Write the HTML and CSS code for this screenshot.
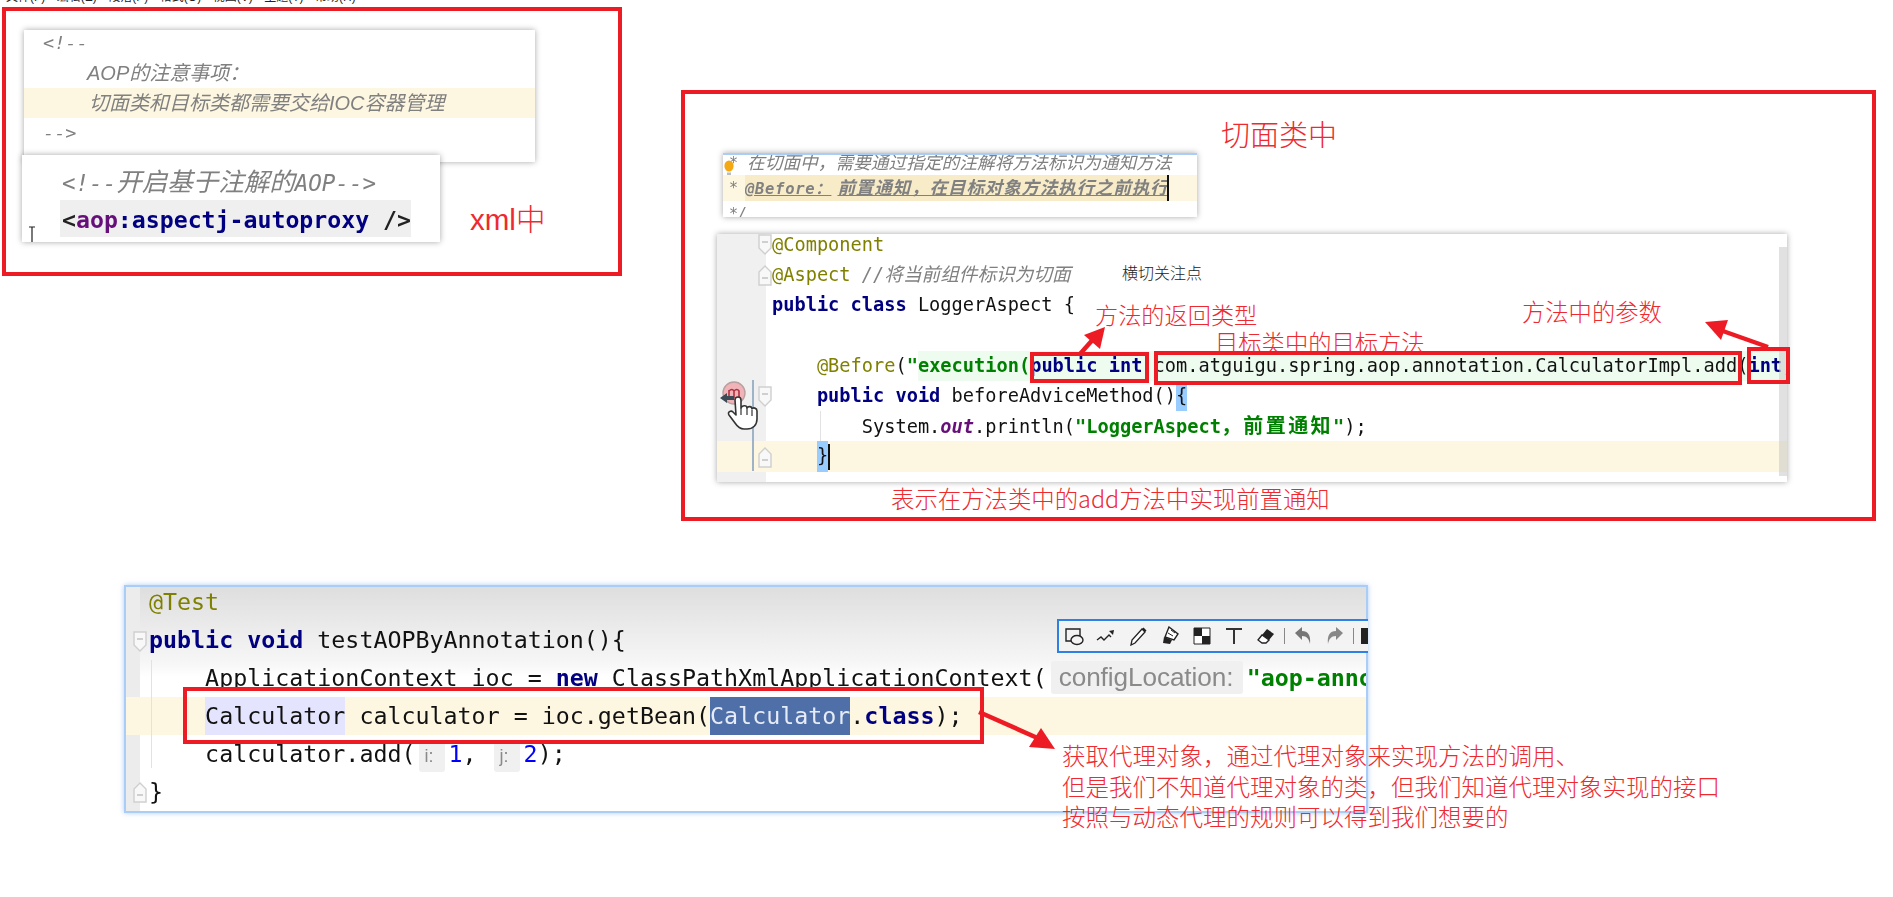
FILE: index.html
```html
<!DOCTYPE html>
<html lang="zh">
<head>
<meta charset="utf-8">
<title>AOP 笔记</title>
<link rel="stylesheet" href="styles.css">
</head>
<body>
<svg class="defs" width="0" height="0" aria-hidden="true">
  <symbol id="fold-open" viewBox="0 0 14 22"><path d="M1 1h12v13l-6 6-6-6z" fill="#f8f8f8" stroke="#cfcfcf" stroke-width="1.4"/><path d="M4 8h6" stroke="#bdbdbd" stroke-width="1.4"/></symbol>
  <symbol id="fold-close" viewBox="0 0 14 22"><path d="M1 21h12V8L7 2 1 8z" fill="#f8f8f8" stroke="#cfcfcf" stroke-width="1.4"/><path d="M4 14h6" stroke="#bdbdbd" stroke-width="1.4"/></symbol>
</svg>
<main class="canvas">
  <nav class="menu"><span>文件(F)</span><span>编辑(E)</span><span>段落(P)</span><span>格式(O)</span><span>视图(V)</span><span>主题(T)</span><span>帮助(H)</span></nav>

  <section class="frame frame-xml"></section>
  <section class="frame frame-aspect"></section>

  <div class="shot shot-note">
    <div class="note-line note-first">&lt;!--</div>
    <div class="note-line note-in1">AOP的注意事项&#65306;</div>
    <div class="note-line note-in2 note-hl">切面类和目标类都需要交给IOC容器管理</div>
    <div class="note-line note-first">--&gt;</div>
  </div>

  <div class="shot shot-xml">
    <div class="xml-comment">&lt;!--<span class="xml-cjk">开启基于注解的</span>AOP--&gt;</div>
    <div class="xml-tag">&lt;<span class="ns">aop</span><span class="tagname">:aspectj-autoproxy</span> /&gt;</div>
    <svg class="ibeam" viewBox="0 0 8 16" width="8" height="16"><path d="M1 1h6M4 1v15" stroke="#222" stroke-width="1.2" fill="none"/></svg>
  </div>
  <div class="label label-xml">xml中</div>

  <div class="label label-title">切面类中</div>

  <div class="shot shot-doc">
    <div class="doc-row doc-top"><span class="doc-star">*</span><span>在切面中&#65292;需要通过指定的注解将方法标识为通知方法</span></div>
    <div class="doc-row doc-hl"><span class="doc-star">*</span><span class="doc-mark"><span class="doc-tag">@Before&#65306;</span>前置通知&#65292;在目标对象方法执行之前执行</span></div>
    <div class="doc-row doc-end"><span class="doc-star">*/</span></div>
    <svg class="bulb" viewBox="0 0 10 16" width="10" height="16"><ellipse cx="5" cy="6" rx="4.6" ry="5.6" fill="#f3a814"/><path d="M3 12.5h4v2.5H3z" fill="#bbb"/></svg>
  </div>

  <div class="shot shot-aspect">
    <div class="code code-a">
      <div class="ln"><span class="ann">@Component</span></div>
      <div class="ln"><span class="ann">@Aspect</span> <span class="cmt">//将当前组件标识为切面</span></div>
      <div class="ln"><span class="kw">public class</span> LoggerAspect {</div>
      <div class="ln"></div>
      <div class="ln">    <span class="ann">@Before</span>(<span class="str">"</span><span class="inj"><span class="str">execution(</span><span class="kw">public int</span> com.atguigu.spring.aop.annotation.CalculatorImpl.add(<span class="kw">int</span>,<span class="kw">int</span>))</span></div>
      <div class="ln">    <span class="kw">public void</span> beforeAdviceMethod()<span class="brace">{</span></div>
      <div class="ln">        System.<span class="static">out</span>.println(<span class="str">"LoggerAspect<span class="wide">&#65292;前置通知</span>"</span>);</div>
      <div class="ln ln-hl">    <span class="brace">}</span><span class="caret"></span></div>
    </div>
    <svg class="fold f1" width="14" height="22"><use href="#fold-open"/></svg>
    <svg class="fold f2" width="14" height="22"><use href="#fold-close"/></svg>
    <svg class="fold f3" width="14" height="22"><use href="#fold-open"/></svg>
    <svg class="fold f4" width="14" height="22"><use href="#fold-close"/></svg>
    <div class="gutter-line"></div>
    <div class="guide"></div>
    <div class="scrollbar"></div>
    <svg class="hand" viewBox="0 0 40 50" width="40" height="50">
      <circle cx="15" cy="13" r="11" fill="#efb3b8" stroke="#b9a0a0" stroke-width="1.4"/>
      <path d="M10 18v-8M10 11q3-3 5 0v7M15 11q3-3 5 0v7" fill="none" stroke="#b03040" stroke-width="1.6"/>
      <path d="M1 18l7-5v3h7v4H8v3z" fill="#3c4a55"/>
      <path d="M16 20c0-4 6-4 6 0v8c1-3 6-3 6 0 1-2 5-2 5 1 1-2 5-1 5 2v8c0 6-4 10-10 10h-3c-4 0-7-3-9-6l-6-8c-2-3 2-5 4-3l3 3z" fill="#fff" stroke="#333" stroke-width="1.6" stroke-linejoin="round"/>
      <path d="M22 28v7M28 28v7M33 30v6" stroke="#333" stroke-width="1.2" fill="none"/>
    </svg>
  </div>

  <div class="label label-small">横切关注点</div>
  <div class="label label-ret">方法的返回类型</div>
  <div class="label label-target">目标类中的目标方法</div>
  <div class="label label-param">方法中的参数</div>
  <div class="label label-desc">表示在方法类中的add方法中实现前置通知</div>

  <div class="mark mark-ret"></div>
  <div class="mark mark-method"></div>
  <div class="mark mark-int"></div>

  <div class="shot shot-test">
    <div class="code code-t">
      <div class="ln"><span class="ann">@Test</span></div>
      <div class="ln"><span class="kw">public void</span> testAOPByAnnotation(){</div>
      <div class="ln">    ApplicationContext ioc = <span class="kw">new</span> ClassPathXmlApplicationContext(<span class="hint hint-name">configLocation:</span><span class="str">"aop-annotation.xml"</span>);</div>
      <div class="ln ln-hl"><span>    </span><span class="use">Calculator</span> calculator = ioc.getBean(<span class="sel">Calculator</span>.<span class="kw-plain">class</span>);</div>
      <div class="ln">    calculator.add(<span class="hint hint-i">i:</span><span class="num">1</span>, <span class="hint hint-j">j:</span><span class="num">2</span>);</div>
      <div class="ln">}</div>
    </div>
    <svg class="fold f5" width="14" height="22"><use href="#fold-open"/></svg>
    <svg class="fold f6" width="14" height="22"><use href="#fold-close"/></svg>
    <div class="guide guide-t"></div>
  </div>

  <div class="toolbar">
    <svg viewBox="0 0 20 20" width="20" height="20"><path d="M2 3h14v12H2z" fill="none" stroke="#222" stroke-width="1.4"/><ellipse cx="13" cy="14" rx="6" ry="4.5" fill="#f4f4f4" stroke="#222" stroke-width="1.4"/></svg>
    <svg viewBox="0 0 20 20" width="20" height="20"><path d="M1 14l4-3 3 3 5-5 2 2" fill="none" stroke="#222" stroke-width="1.4"/><path d="M13 5l5-1-1 5z" fill="#222"/></svg>
    <svg viewBox="0 0 20 20" width="20" height="20"><path d="M3 19l1-5L14 3l3 3L7 17z" fill="#fff" stroke="#222" stroke-width="1.3"/><path d="M14 3l1.5-1.5 3 3L17 6z" fill="#222"/></svg>
    <svg viewBox="0 0 20 20" width="20" height="20"><path d="M9 1l9 7-4 6-9-3z" fill="#fff" stroke="#222" stroke-width="1.4"/><path d="M4 11l8 3-2 4-7-1z" fill="#222"/><path d="M11 4l4 3M8 7l5 3" stroke="#222" stroke-width="1"/></svg>
    <svg viewBox="0 0 20 20" width="20" height="20"><path d="M2 2h16v16H2z" fill="#fff" stroke="#222" stroke-width="1"/><path d="M2 2h8v8H2zM10 10h8v8h-8z" fill="#222"/></svg>
    <svg viewBox="0 0 20 20" width="20" height="20"><path d="M3 4V3h14v1M10 3v15" fill="none" stroke="#333" stroke-width="2"/></svg>
    <svg viewBox="0 0 20 20" width="20" height="20"><path d="M11 3l7 5-5 6-7-5z" fill="#222"/><path d="M6 9l7 5-3 3H6l-4-3z" fill="#fff" stroke="#222" stroke-width="1.3"/></svg>
    <i class="sep"></i>
    <svg viewBox="0 0 20 20" width="20" height="20"><path d="M2 7l7-6v4c6 0 9 4 8 13-1-5-3-8-8-8v4z" fill="#777"/></svg>
    <svg viewBox="0 0 20 20" width="20" height="20"><path d="M18 7l-7-6v4C5 5 2 9 3 18c1-5 3-8 8-8v4z" fill="#888"/></svg>
    <i class="sep"></i>
    <i class="clip"></i>
  </div>

  <div class="mark mark-bean"></div>
  <div class="label label-proxy">
    <div>获取代理对象&#65292;通过代理对象来实现方法的调用、</div>
    <div>但是我们不知道代理对象的类&#65292;但我们知道代理对象实现的接口</div>
    <div>按照与动态代理的规则可以得到我们想要的</div>
  </div>

  <svg class="arrows" width="1893" height="897" viewBox="0 0 1893 897" aria-hidden="true">
    <g fill="#ed1c24" stroke="#ed1c24">
      <path d="M1080 354L1096 336" stroke-width="4.5" fill="none"/>
      <path d="M1105 327l-5 22-16-14z" stroke="none"/>
      <path d="M1768 347L1720 330" stroke-width="4.5" fill="none"/>
      <path d="M1705 322l23-2-7 20z" stroke="none"/>
      <path d="M979 712L1042 740" stroke-width="4.5" fill="none"/>
      <path d="M1055 749l-26-2 12-19z" stroke="none"/>
    </g>
  </svg>
</main>
</body>
</html>
```
FILE: styles.css
```css
* { box-sizing: border-box; }
html, body { margin: 0; padding: 0; background: #fff; overflow: hidden; }
.defs { position: absolute; }
.canvas {
  position: relative;
  width: 1893px;
  height: 897px;
  overflow: hidden;
  font-family: "Liberation Sans", "Noto Sans CJK SC", sans-serif;
}

.menu {
  position: absolute; left: 6px; top: -13px;
  display: flex; gap: 11.5px;
  font-size: 12px; line-height: 20px; color: #222;
}

.frame { position: absolute; border: 4px solid #ed1c24; background: transparent; }
.frame-xml { left: 2px; top: 7px; width: 620px; height: 269px; }
.frame-aspect { left: 681px; top: 90px; width: 1195px; height: 431px; }

.shot {
  position: absolute; background: #fff; overflow: hidden;
  box-shadow: 0 0 6px rgba(0,0,0,.35);
  filter: blur(.5px);
}

/* note */
.shot-note { left: 24px; top: 30px; width: 511px; height: 132px; font-size: 20px; font-style: italic; color: #808080; }
.note-line { height: 30px; line-height: 30px; white-space: pre; }
.note-line:first-child { margin-top: -2px; }
.note-first { padding-left: 19px; font-family: "DejaVu Sans Mono", monospace; font-size: 18.5px; }
.note-in1 { padding-left: 63px; }
.note-in2 { padding-left: 65px; }
.note-hl { background: #fdf6e0; }

/* xml */
.shot-xml { left: 22px; top: 155px; width: 418px; height: 87px; padding: 8px 0 0 38px; font-family: "DejaVu Sans Mono", "Noto Sans CJK SC", monospace; }
.xml-comment { height: 37px; line-height: 34px; font-size: 22.5px; font-style: italic; color: #808080; white-space: pre; padding-left: 2px; }
.xml-cjk { font-size: 25.5px; font-family: "Noto Sans CJK SC", sans-serif; }
.xml-tag { width: 351px; height: 37px; line-height: 40px; overflow: hidden; background: #efefef; font-size: 23.2px; font-weight: 700; color: #222; white-space: pre; padding-left: 2px; }
.ns { color: #660e7a; }
.tagname { color: #000080; }
.ibeam { position: absolute; left: 6px; top: 71px; }

/* doc */
.shot-doc { left: 723px; top: 153px; width: 474px; height: 64px; border-top: 2px solid #a9cdf5; font-size: 17.7px; font-style: italic; color: #808080; }
.doc-row { display: flex; white-space: pre; }
.doc-star { width: 24px; padding-left: 6px; font-family: "DejaVu Sans Mono", monospace; font-size: 15px; flex: none; }
.doc-top { height: 20px; line-height: 16px; }
.doc-hl { height: 26px; line-height: 26px; background: #fdf6e0; }
.doc-end { line-height: 26px; }
.doc-mark { margin-left: -2px; width: 424px; background: #f7ebc8; text-decoration: underline; font-weight: 700; letter-spacing: .7px; border-right: 2px solid #111; overflow: hidden; }
.doc-tag { font-family: "DejaVu Sans Mono", "Noto Sans CJK SC", monospace; font-size: 15.5px; margin-right: 6px; }
.bulb { position: absolute; left: 1px; top: 5px; }

/* code */
.code { font-family: "DejaVu Sans Mono", "Noto Sans CJK SC", monospace; color: #111; }
.ln { white-space: pre; }
.code-a { font-size: 18.65px; margin-top: -4px; padding-left: 55px; }
.code-a .ln { height: 30.2px; line-height: 30.2px; }
.code-t { font-size: 23.3px; margin-top: -4px; padding-left: 23px; }
.code-t .ln { height: 38px; line-height: 38px; }
.ln-hl { background: #fdf6e0; margin-left: -80px; padding-left: 80px; }
.kw { color: #000080; font-weight: 700; }
.ann { color: #808000; }
.str { color: #008000; font-weight: 700; }
.cmt { color: #808080; font-style: italic; }
.static { color: #660e7a; font-weight: 700; font-style: italic; }
.num { color: #0000ff; }
.inj { display: inline-block; background: #edfcef; }
.brace { display: inline-block; background: #99ccff; }
.caret { display: inline-block; width: 2px; height: 26px; background: #111; vertical-align: middle; }
.wide { letter-spacing: 2.4px; font-size: 20px; }

.shot-aspect { left: 717px; top: 234px; width: 1070px; height: 248px; background: linear-gradient(90deg, #f0f0f0 49px, #fff 49px); }
.fold { position: absolute; }
.f1 { left: 41px; top: 0; }
.f2 { left: 41px; top: 30px; }
.f3 { left: 41px; top: 152px; }
.f4 { left: 41px; top: 212px; }
.gutter-line { position: absolute; left: 35px; top: 146px; width: 2px; height: 91px; background: #9fb3c8; }
.guide { position: absolute; left: 103px; top: 177px; width: 1px; height: 30px; background: #e2e2e2; }
.scrollbar { position: absolute; right: 0; top: 13px; width: 8px; height: 229px; background: rgba(200,200,200,.55); }
.hand { position: absolute; left: 2px; top: 146px; }

/* test */
.shot-test {
  left: 124px; top: 585px; width: 1244px; height: 228px;
  border: 2px solid #a9cdf7;
  box-shadow: 0 0 5px rgba(120,170,240,.6);
  background: linear-gradient(90deg, #ececec 14px, transparent 14px), linear-gradient(#dedede, #f6f6f6 75px, #fff 90px);
}
.use { display: inline-block; background: #e4e4ff; }
.sel { display: inline-block; background: #4f6fa8; color: #e6ecf6; }
.kw-plain { color: #000080; font-weight: 700; }
.hint { background: #f0f0f0; color: #8a8a8a; border-radius: 3px; font-family: "Liberation Sans", sans-serif; }
.hint-name { display: inline-block; width: 192px; line-height: 32px; height: 33px; padding: 0 0 0 8px; margin: 0 4px 0 4px; font-size: 26.2px; letter-spacing: -.1px; }
.hint-i, .hint-j { display: inline-block; width: 26px; height: 32px; line-height: 32px; padding: 0 0 0 6px; font-size: 18px; margin: 0 4px 0 3px; }
.guide-t { left: 25px; top: 73px; height: 108px; }
.f5 { left: 7px; top: 44px; }
.f6 { left: 7px; top: 194px; }

/* toolbar */
.toolbar {
  position: absolute; left: 1057px; top: 619px; width: 311px; height: 34px;
  display: flex; align-items: center; gap: 12px;
  padding-left: 5px;
  background: #f3f3f3; border: 2px solid #2f80e4; border-right: 0;
  overflow: hidden;
}
.toolbar svg { flex: none; }
.sep { flex: none; width: 1px; height: 16px; background: #888; margin: 0 -4px; }
.clip { flex: none; width: 10px; height: 16px; background: #222; margin-left: -1px; }

/* red marks */
.mark { position: absolute; border: 4px solid #ed1c24; }
.mark-ret { left: 1030px; top: 352px; width: 119px; height: 31px; }
.mark-method { left: 1154px; top: 351px; width: 588px; height: 34px; }
.mark-int { left: 1747px; top: 347px; width: 43px; height: 37px; }
.mark-bean { left: 183px; top: 687px; width: 801px; height: 57px; }

/* labels */
.label { position: absolute; color: #ee2a30; white-space: nowrap; font-weight: 300; font-family: "Noto Sans CJK SC", sans-serif; }
.label-xml { left: 470px; top: 200px; font-size: 29.5px; line-height: 40px; font-family: "Liberation Sans", "Noto Sans CJK SC", sans-serif; }
.label-title { left: 1221px; top: 113px; font-size: 29px; line-height: 40px; }
.label-small { left: 1122px; top: 262px; font-size: 16px; line-height: 20px; color: #222; }
.label-ret { left: 1095px; top: 298px; font-size: 23.2px; line-height: 32px; }
.label-target { left: 1215px; top: 326px; font-size: 23.3px; line-height: 32px; }
.label-param { left: 1522px; top: 295px; font-size: 23.3px; line-height: 32px; }
.label-desc { left: 891px; top: 482px; font-size: 23.4px; line-height: 32px; }
.label-proxy { left: 1062px; top: 740px; font-size: 23.5px; line-height: 30.5px; }

.arrows { position: absolute; left: 0; top: 0; pointer-events: none; }
```
